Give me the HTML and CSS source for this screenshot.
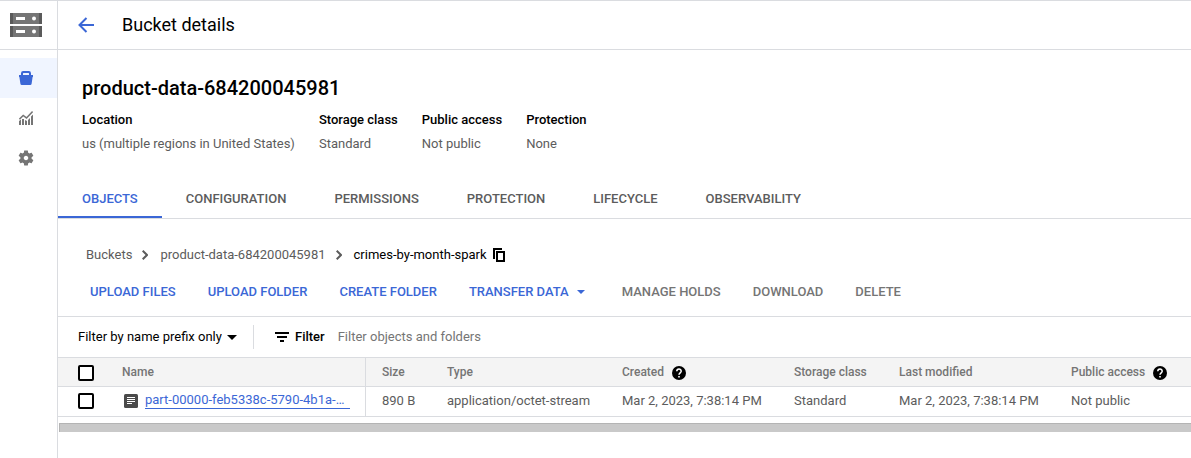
FILE: index.html
```html
<!DOCTYPE html>
<html lang="en">
<head>
<meta charset="utf-8">
<meta name="viewport" content="width=device-width, initial-scale=1">
<title>Bucket details</title>
<link rel="stylesheet" href="styles.css">
</head>
<body>
<div class="app">
  <nav class="rail" aria-label="Cloud Storage">
    <div class="rail-logo">
      <svg width="32" height="24" viewBox="0 0 32 24" aria-hidden="true">
        <path fill="#757575" d="M0 0h32v11H0zM0 13h32v11H0z"/>
        <path fill="#5a5a5a" d="M0 0h3v11H0zM0 13h3v11H0zM29 0h3v11h-3zM29 13h3v11h-3z"/>
        <path fill="#fff" d="M6 4h9v3H6zM6 17h9v3H6z"/>
        <circle cx="24" cy="5.5" r="2" fill="#fff"/>
        <circle cx="24" cy="18.5" r="2" fill="#fff"/>
      </svg>
    </div>
    <ul class="rail-list">
      <li><a class="rail-item rail-item-active" href="#buckets" aria-label="Buckets">
        <svg width="14" height="14" viewBox="0 0 14 14" aria-hidden="true"><path fill="currentColor" fill-rule="evenodd" d="M0 4h2V2.200Q2 0 4.200 0h5.600Q12 0 12 2.200V4h2v2h-.4l-1 6.700Q12.400 14 11.200 14H2.800Q1.600 14 1.400 12.700L.4 6H0zM4 4h6V2.500Q10 2 9.500 2h-5Q4 2 4 2.500z"/></svg>
      </a></li>
      <li><a class="rail-item" href="#monitoring" aria-label="Monitoring">
        <svg width="14" height="14" viewBox="0 0 14 14" aria-hidden="true"><path fill="currentColor" d="M0 10l2-1.500V14H0zM3 8h2v6H3zM6 9l2 1v4H6zM9 9l2-2v7H9zM12 5.500L14 3.500V14h-2z"/><path fill="none" stroke="currentColor" stroke-width="1.500" d="M.4 8.200L4.200 4.500l3.300 2.400L13.600.6"/></svg>
      </a></li>
      <li><a class="rail-item" href="#settings" aria-label="Settings">
        <svg width="18" height="18" viewBox="0 0 24 24" aria-hidden="true"><path fill="currentColor" d="M19.430 12.980c.04-.32.07-.64.07-.98s-.03-.66-.07-.98l2.110-1.650c.19-.15.24-.42.12-.64l-2-3.460c-.12-.22-.39-.3-.61-.22l-2.490 1c-.52-.4-1.080-.73-1.690-.98l-.38-2.650C14.460 2.180 14.250 2 14 2h-4c-.25 0-.46.18-.49.42l-.38 2.650c-.61.25-1.170.59-1.690.98l-2.490-1c-.23-.09-.49 0-.61.22l-2 3.460c-.13.22-.07.49.12.64l2.110 1.650c-.04.32-.07.65-.07.98s.03.66.07.98l-2.110 1.650c-.19.15-.24.42-.12.64l2 3.460c.12.22.39.3.61.22l2.490-1c.52.4 1.080.73 1.690.98l.38 2.650c.03.24.24.42.49.42h4c.25 0 .46-.18.49-.42l.38-2.650c.61-.25 1.170-.59 1.690-.98l2.490 1c.23.09.49 0 .61-.22l2-3.460c.12-.22.07-.49-.12-.64l-2.110-1.650zM12 15c-1.660 0-3-1.340-3-3s1.340-3 3-3 3 1.340 3 3-1.340 3-3 3z"/></svg>
      </a></li>
    </ul>
  </nav>

  <div class="content">
    <header class="topbar">
      <a class="back" href="#back" aria-label="Back">
        <svg width="16" height="16" viewBox="0 0 16 16" aria-hidden="true"><path fill="none" stroke="currentColor" stroke-width="2" d="M16 8H1.500M8.500 1l-7 7 7 7"/></svg>
      </a>
      <h1 class="page-title">Bucket details</h1>
    </header>

    <main>
      <section class="summary">
        <h2 class="bucket-name">product-data-684200045981</h2>
        <dl class="facts">
          <div><dt>Location</dt><dd>us (multiple regions in United States)</dd></div>
          <div><dt>Storage class</dt><dd>Standard</dd></div>
          <div><dt>Public access</dt><dd>Not public</dd></div>
          <div><dt>Protection</dt><dd>None</dd></div>
        </dl>
      </section>

      <div class="tabs" role="tablist">
        <button class="tab tab-active" role="tab" aria-selected="true">OBJECTS</button>
        <button class="tab" role="tab" aria-selected="false">CONFIGURATION</button>
        <button class="tab" role="tab" aria-selected="false">PERMISSIONS</button>
        <button class="tab" role="tab" aria-selected="false">PROTECTION</button>
        <button class="tab" role="tab" aria-selected="false">LIFECYCLE</button>
        <button class="tab" role="tab" aria-selected="false">OBSERVABILITY</button>
      </div>

      <nav class="crumbs" aria-label="Breadcrumb">
        <a class="crumb" href="#all">Buckets</a>
        <svg class="chevron" width="6" height="10" viewBox="0 0 6 10" aria-hidden="true"><path fill="none" stroke="currentColor" stroke-width="2" d="M.7.7L5 5 .7 9.300"/></svg>
        <a class="crumb" href="#bucket">product-data-684200045981</a>
        <svg class="chevron" width="6" height="10" viewBox="0 0 6 10" aria-hidden="true"><path fill="none" stroke="currentColor" stroke-width="2" d="M.7.7L5 5 .7 9.300"/></svg>
        <span class="crumb-current">crimes-by-month-spark</span>
        <button class="copy" aria-label="Copy path">
          <svg width="12" height="14" viewBox="0 0 12 14" aria-hidden="true"><path fill="none" stroke="currentColor" stroke-width="2" d="M1 11V1h8"/><rect x="4" y="4" width="7" height="9" fill="none" stroke="currentColor" stroke-width="2"/></svg>
        </button>
      </nav>

      <div class="actions">
        <button class="action">UPLOAD FILES</button>
        <button class="action">UPLOAD FOLDER</button>
        <button class="action">CREATE FOLDER</button>
        <button class="action action-menu">TRANSFER DATA <svg width="8" height="4" viewBox="0 0 8 4" aria-hidden="true"><path fill="currentColor" d="M0 0h8L4 4z"/></svg></button>
        <button class="action" disabled>MANAGE HOLDS</button>
        <button class="action" disabled>DOWNLOAD</button>
        <button class="action" disabled>DELETE</button>
      </div>

      <div class="filterbar">
        <div class="scope">
          <select class="scope-select" aria-label="Filter scope">
            <option>Filter by name prefix only</option>
          </select>
          <svg width="10" height="5" viewBox="0 0 10 5" aria-hidden="true"><path fill="currentColor" d="M0 0h10L5 5z"/></svg>
        </div>
        <label class="filter-label" for="filter">
          <svg width="14" height="10" viewBox="0 0 14 10" aria-hidden="true"><path fill="currentColor" d="M0 0h14v2H0zM2 4h10v2H2zM5 8h4v2H5z"/></svg>
          Filter
        </label>
        <input class="filter-input" id="filter" type="text" placeholder="Filter objects and folders">
      </div>

      <table class="objects">
        <colgroup>
          <col class="col-check"><col class="col-name"><col class="col-size"><col class="col-type"><col class="col-date"><col class="col-class"><col class="col-date"><col>
        </colgroup>
        <thead>
          <tr>
            <th class="check"><input type="checkbox" aria-label="Select all"></th>
            <th class="name">Name</th>
            <th>Size</th>
            <th>Type</th>
            <th><span class="with-help">Created <svg width="14" height="14" viewBox="0 0 14 14" aria-hidden="true"><circle cx="7" cy="7" r="7" fill="#000"/><path fill="none" stroke="#fff" stroke-width="1.500" d="M4.800 5.300C4.800 2.300 9.200 2.300 9.200 5.200 9.200 6.800 7 6.900 7 8.800"/><path fill="#fff" d="M6.200 9.900h1.600v1.500H6.200z"/></svg></span></th>
            <th>Storage class</th>
            <th>Last modified</th>
            <th><span class="with-help">Public access <svg width="14" height="14" viewBox="0 0 14 14" aria-hidden="true"><circle cx="7" cy="7" r="7" fill="#000"/><path fill="none" stroke="#fff" stroke-width="1.500" d="M4.800 5.300C4.800 2.300 9.200 2.300 9.200 5.200 9.200 6.800 7 6.900 7 8.800"/><path fill="#fff" d="M6.200 9.900h1.600v1.500H6.200z"/></svg></span></th>
          </tr>
        </thead>
        <tbody>
          <tr>
            <td class="check"><input type="checkbox" aria-label="Select object"></td>
            <td class="name">
              <div class="object">
                <svg width="14" height="14" viewBox="0 0 14 14" aria-hidden="true"><rect width="14" height="14" rx="1.500" fill="#4a4a4a"/><path fill="#fff" d="M3 3h8v1H3zM3 5h8v1H3zM3 7h8v1H3zM3 9h5v1H3z"/></svg>
                <a class="object-link" href="#object">part-00000-feb5338c-5790-4b1a-…</a>
              </div>
            </td>
            <td>890 B</td>
            <td>application/octet-stream</td>
            <td>Mar 2, 2023, 7:38:14 PM</td>
            <td>Standard</td>
            <td>Mar 2, 2023, 7:38:14 PM</td>
            <td>Not public</td>
          </tr>
        </tbody>
      </table>
      <div class="scroll-thumb"></div>
    </main>
  </div>
</div>
</body>
</html>
```
FILE: styles.css
```css
:root {
  --blue: #3b67d6;
  --line: #dadce0;
  --text: #5c5c5c;
  --muted: #757575;
}

* { box-sizing: border-box; }

body {
  margin: 0;
  background: #fff;
  color: var(--text);
  font: 13px/20px Roboto, "Liberation Sans", sans-serif;
}

h1, h2, dl, dd, ul { margin: 0; padding: 0; }
ul { list-style: none; }
svg { display: block; flex: none; }
a { color: inherit; text-decoration: none; }
button, input, select { font: inherit; color: inherit; }
button { border: 0; padding: 0; background: none; cursor: pointer; white-space: nowrap; }

.app {
  display: flex;
  min-height: 100vh;
  border-top: 1px solid var(--line);
}

.rail {
  flex: none;
  width: 58px;
  border-right: 1px solid var(--line);
}
.rail-logo {
  display: flex;
  align-items: center;
  height: 49px;
  padding-left: 10px;
  border-bottom: 1px solid var(--line);
}
.rail-list { padding-top: 8px; }
.rail-item {
  display: flex;
  align-items: center;
  justify-content: center;
  height: 40px;
  padding-right: 5px;
  color: var(--muted);
}
.rail-item-active { background: #f0f5ff; color: var(--blue); }

.content { flex: 1; min-width: 0; overflow: hidden; }

.topbar {
  display: flex;
  align-items: center;
  gap: 28px;
  height: 49px;
  padding-left: 20px;
  border-bottom: 1px solid var(--line);
}
.back { color: var(--blue); }
.page-title { color: #000; font-size: 18px; font-weight: 400; line-height: 24px; }

.summary { padding: 26px 24px 0; }
.bucket-name { color: #000; font-size: 20px; font-weight: 500; line-height: 24px; }
.facts { display: flex; gap: 24px; padding-top: 10px; white-space: nowrap; }
.facts dt { color: #000; font-weight: 500; }
.facts dd { padding-top: 4px; }

.tabs {
  display: flex;
  margin-top: 28px;
  border-bottom: 1px solid var(--line);
}
.tab {
  height: 36px;
  padding: 0 24px;
  border-bottom: 2px solid transparent;
  font-weight: 500;
}
.tab-active { color: var(--blue); border-color: var(--blue); }

.crumbs {
  display: flex;
  align-items: center;
  padding: 26px 28px 0;
  white-space: nowrap;
}
.chevron { margin: 0 12px 0 10px; }
.crumb-current { color: #000; }
.copy { margin-left: 6px; color: #000; }

.actions {
  display: flex;
  gap: 32px;
  padding: 17px 32px 14px;
  border-bottom: 1px solid var(--line);
}
.action { color: var(--blue); font-weight: 500; }
.action:disabled { color: var(--muted); cursor: default; }
.action-menu { display: flex; align-items: center; gap: 8px; padding-right: 5px; }

.filterbar {
  display: flex;
  align-items: center;
  height: 40px;
  padding-left: 20px;
  color: #000;
}
.scope {
  display: flex;
  align-items: center;
  gap: 5px;
  height: 24px;
  padding-right: 16px;
  border-right: 1px solid var(--line);
}
.scope-select { appearance: none; padding: 0; border: 0; background: none; }
.filter-label {
  display: flex;
  align-items: center;
  gap: 6px;
  padding-left: 21px;
  font-weight: 500;
}
.filter-input { flex: 1; min-width: 0; padding: 0 0 0 13px; border: 0; outline: 0; }
.filter-input::placeholder { color: var(--muted); opacity: 1; }

.objects {
  width: 100%;
  table-layout: fixed;
  border-collapse: separate;
  border-spacing: 0;
  border-top: 1px solid var(--line);
}
.col-check { width: 48px; }
.col-name { width: 260px; }
.col-size { width: 65px; }
.col-type { width: 175px; }
.col-date { width: 172px; }
.col-class { width: 105px; }
.objects th, .objects td {
  padding: 0 0 0 16px;
  border-bottom: 1px solid var(--line);
  text-align: left;
  white-space: nowrap;
}
.objects th {
  height: 29px;
  background: #f4f4f4;
  color: var(--muted);
  font-size: 12px;
  font-weight: 500;
}
.objects td { height: 30px; padding-bottom: 2px; }
.objects th.check { padding-top: 2px; }
.objects .check { padding-left: 20px; }
.objects .name { padding-right: 15px; border-right: 1px solid var(--line); }
.objects input {
  appearance: none;
  display: block;
  width: 16px;
  height: 16px;
  margin: 0;
  border: 2px solid #000;
  border-radius: 2px;
  background: #fff;
}
.with-help { display: flex; align-items: center; gap: 8px; }
.with-help svg { margin-top: 2px; }
.object { display: flex; align-items: center; gap: 7px; padding-left: 2px; }
.object-link {
  flex: 1;
  line-height: 16px;
  color: var(--blue);
  border-bottom: 1px solid var(--blue);
}

.scroll-thumb {
  height: 9px;
  margin: 6px 0 0 1px;
  border: 1px solid #b4b4b4;
  border-width: 1px 0 0 1px;
  background: #c9c9c9;
}
```
